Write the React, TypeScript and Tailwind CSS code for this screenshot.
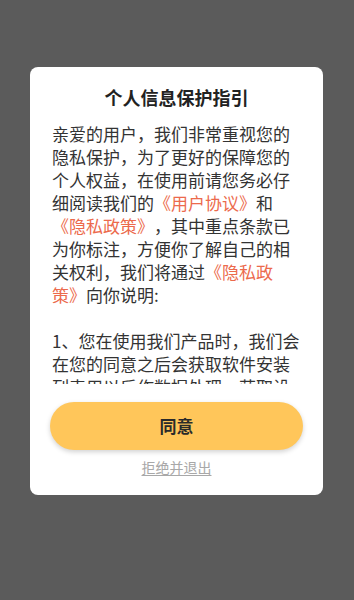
export default function App() {
  const link = "text-[#ec6a4c]"
  return (
    <div
      className="min-h-[600px] w-full bg-[#5b5b5b] pt-[67px] px-[30px] [text-spacing-trim:space-all]"
      style={{ fontFamily: '"Noto Sans CJK SC", "Noto Sans", sans-serif' }}
    >
      <div className="w-[293px] rounded-[8px] bg-white flex flex-col">
        <h2 className="pt-[17px] text-center text-[18px] leading-[26px] font-bold text-[#222]">
          个人信息保护指引
        </h2>
        <div className="mt-[12px] h-[262px] overflow-hidden pl-[22px] pr-[20px]">
          <p className="text-[17px] leading-[23px] text-[#333]">
            亲爱的用户，我们非常重视您的隐私保护，为了更好的保障您的个人权益，在使用前请您务必仔细阅读我们的
            <span className={link}>《用户协议》</span>和
            <span className={link}>《隐私政策》</span>
            ，其中重点条款已为你标注，方便你了解自己的相关权利，我们将通过
            <span className={link}>《隐私政策》</span>向你说明:
          </p>
          <p className="mt-[23px] text-[17px] leading-[23px] text-[#333]">
            1、您在使用我们产品时，我们会在您的同意之后会获取软件安装列表用以后作数据处理，获取设备信息用于保障账号安全。
          </p>
        </div>
        <div className="px-[20px] pt-[18px]">
          <button className="w-full h-[48px] rounded-full bg-[#ffc65a] text-[17px] font-bold text-[#2a2a2a] shadow-[0_2px_5px_rgba(0,0,0,0.18)]">
            同意
          </button>
        </div>
        <div className="flex justify-center pt-[7px] pb-[18px]">
          <span className="text-[14px] leading-[20px] text-[#a8a8a8] underline underline-offset-2">
            拒绝并退出
          </span>
        </div>
      </div>
    </div>
  )
}
